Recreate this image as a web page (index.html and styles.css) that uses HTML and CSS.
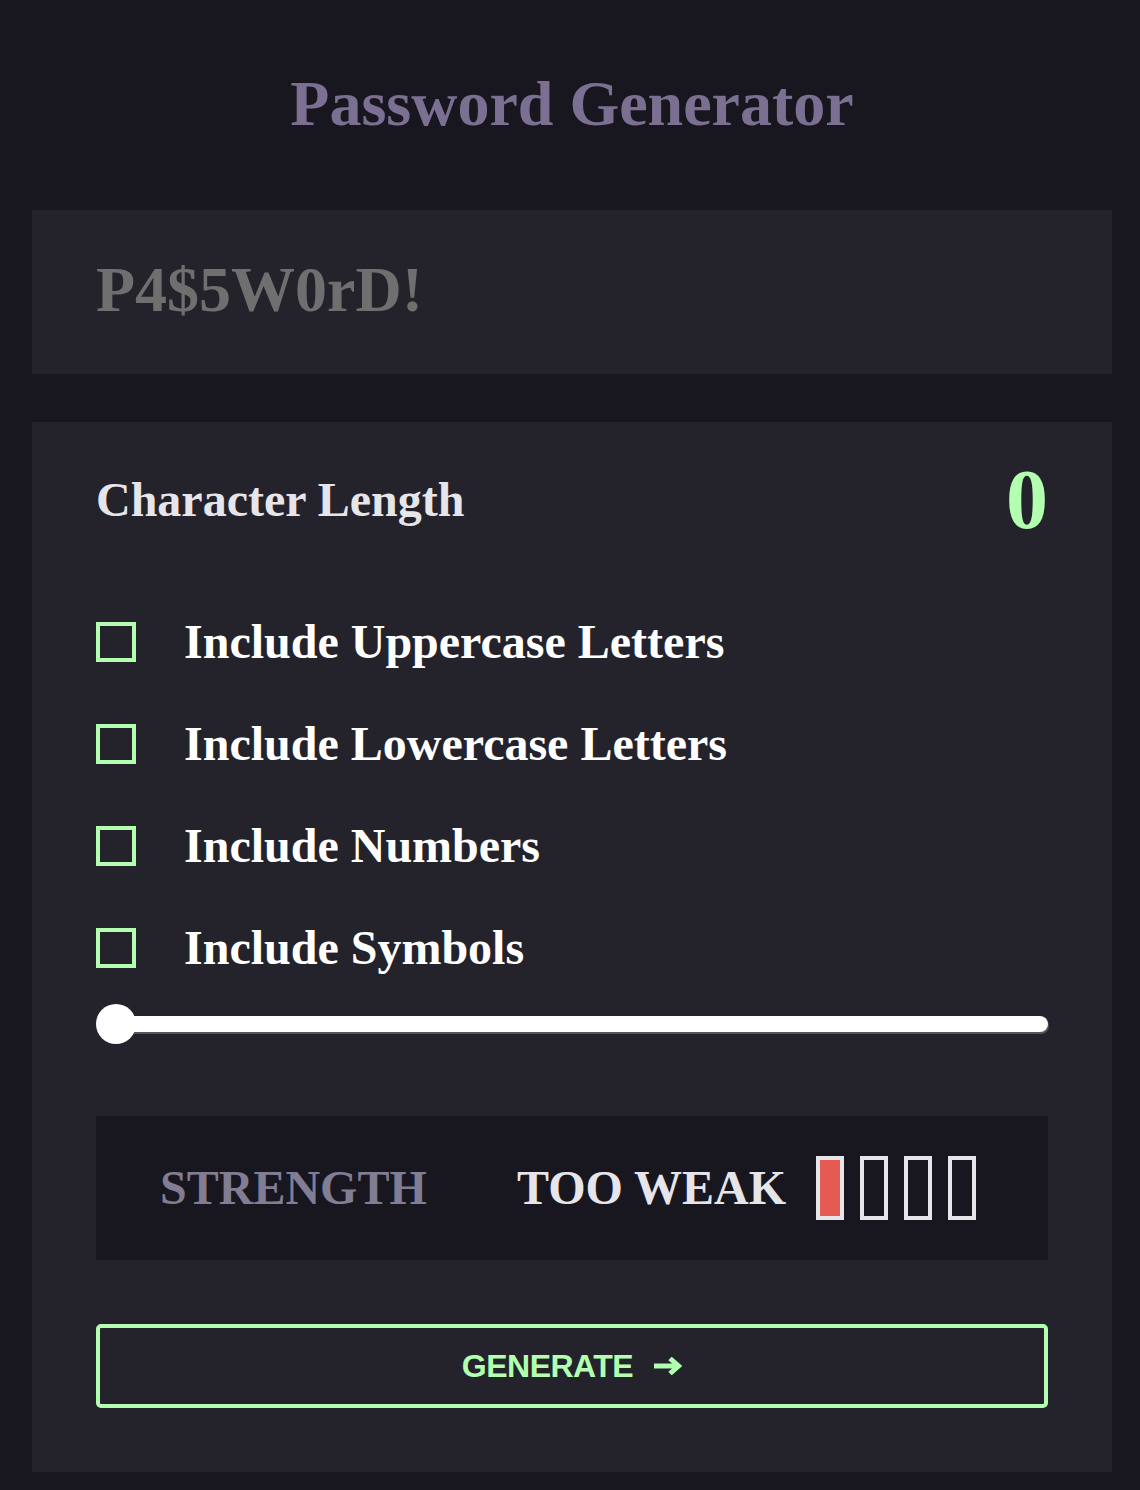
FILE: index.html
```html
<!DOCTYPE html>
<html lang="en">
<head>
<meta charset="utf-8">
<title>Password Generator</title>
<link rel="stylesheet" href="styles.css">
</head>
<body>
<main class="app">
  <h1 class="title">Password Generator</h1>
  <div class="output">P4$5W0rD!</div>
  <section class="panel">
    <div class="length-row">
      <span class="length-label">Character Length</span>
      <span class="length-value">0</span>
    </div>
    <ul class="options">
      <li class="option"><span class="check"></span><span class="option-text">Include Uppercase Letters</span></li>
      <li class="option"><span class="check"></span><span class="option-text">Include Lowercase Letters</span></li>
      <li class="option"><span class="check"></span><span class="option-text">Include Numbers</span></li>
      <li class="option"><span class="check"></span><span class="option-text">Include Symbols</span></li>
    </ul>
    <div class="slider">
      <div class="track"></div>
      <div class="thumb"></div>
    </div>
    <div class="strength">
      <span class="strength-label">STRENGTH</span>
      <div class="strength-right">
        <span class="strength-value">TOO WEAK</span>
        <div class="bars">
          <span class="bar bar-on"></span>
          <span class="bar"></span>
          <span class="bar"></span>
          <span class="bar"></span>
        </div>
      </div>
    </div>
    <button class="generate" type="button">
      <span class="generate-text">GENERATE</span>
      <svg class="arrow" width="28" height="18" viewBox="0 0 28 18" aria-hidden="true">
        <path d="M0 9 H24" stroke="currentColor" stroke-width="5" fill="none"/>
        <path d="M16 1.5 L24.5 9 L16 16.5" stroke="currentColor" stroke-width="5" fill="none" stroke-linejoin="miter"/>
      </svg>
    </button>
  </section>
</main>
</body>
</html>
```

FILE: styles.css
```css
* {
  box-sizing: border-box;
}

html, body {
  margin: 0;
  padding: 0;
  background: #18171f;
}

body {
  font-family: "Liberation Serif", "Times New Roman", serif;
  font-weight: bold;
}

.app {
  width: 1080px;
  margin-left: 32px;
  display: flex;
  flex-direction: column;
}

.title {
  margin: 72px 0 0;
  font-size: 64px;
  line-height: 1;
  text-align: center;
  color: #7b6f92;
  font-weight: bold;
}

.output {
  margin-top: 74px;
  height: 164px;
  padding: 48px 64px 0;
  background: #24232c;
  font-size: 64px;
  line-height: 1;
  color: #6f6f70;
}

.panel {
  margin-top: 48px;
  background: #24232c;
  padding: 38px 64px 64px;
  display: flex;
  flex-direction: column;
}

.length-row {
  height: 80px;
  display: flex;
  align-items: center;
  justify-content: space-between;
}

.length-label {
  font-size: 48px;
  line-height: 1;
  color: #e6e5ea;
}

.length-value {
  font-size: 84px;
  line-height: 80px;
  color: #b2ffb0;
}

.options {
  list-style: none;
  margin: 78px 0 0;
  padding: 0;
  display: flex;
  flex-direction: column;
  gap: 54px;
}

.option {
  height: 48px;
  display: flex;
  align-items: center;
  gap: 48px;
}

.check {
  width: 40px;
  height: 40px;
  border: 4px solid #b2ffb0;
  flex: none;
}

.option-text {
  font-size: 48px;
  line-height: 1;
  color: #ffffff;
}

.slider {
  position: relative;
  margin-top: 32px;
  height: 40px;
  display: flex;
  align-items: center;
}

.track {
  margin-left: 16px;
  flex: 1;
  height: 16px;
  background: #ffffff;
  border-radius: 0 8px 8px 0;
  box-shadow: 1px 2px 0 #55545c;
}

.thumb {
  position: absolute;
  left: 0;
  top: 0;
  width: 40px;
  height: 40px;
  border-radius: 50%;
  background: #ffffff;
}

.strength {
  margin-top: 72px;
  height: 144px;
  background: #18171f;
  padding: 0 72px 0 64px;
  display: flex;
  align-items: center;
  justify-content: space-between;
}

.strength-label {
  font-size: 48px;
  line-height: 1;
  color: #817d92;
}

.strength-right {
  display: flex;
  align-items: center;
  gap: 30px;
}

.strength-value {
  font-size: 48px;
  line-height: 1;
  color: #e6e5ea;
}

.bars {
  display: flex;
  gap: 16px;
}

.bar {
  width: 28px;
  height: 64px;
  border: 4px solid #e6e5ea;
}

.bar-on {
  background: #e55b53;
}

.generate {
  margin-top: 64px;
  height: 84px;
  width: 100%;
  background: transparent;
  border: 4px solid #b2ffb0;
  border-radius: 5px;
  color: #b2ffb0;
  font-family: "Liberation Sans", Arial, sans-serif;
  font-weight: bold;
  font-size: 32px;
  letter-spacing: -0.5px;
  display: flex;
  align-items: center;
  justify-content: center;
  gap: 21px;
  padding: 0;
}

.arrow {
  display: block;
}
```
